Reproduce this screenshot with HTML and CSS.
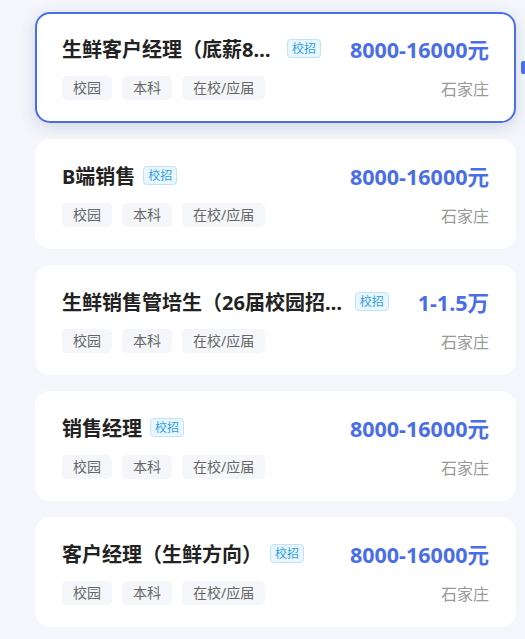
FILE: index.html
```html
<!DOCTYPE html>
<html lang="zh-CN">

<head>
    <meta charset="UTF-8">
    <meta name="viewport" content="width=device-width, initial-scale=1.0">
    <link rel="stylesheet" href="styles.css">
    <title>职位列表</title>
</head>

<body>
    <div class="job-list">
        <div class="job-card active">
            <div class="top-row">
                <div class="name-wrap">
                    <span class="job-name">生鲜客户经理（底薪8000-16000元+提成）</span>
                    <span class="badge">校招</span>
                </div>
                <span class="salary">8000-16000元</span>
            </div>
            <div class="bottom-row">
                <div class="tags">
                    <span class="tag">校园</span>
                    <span class="tag">本科</span>
                    <span class="tag">在校/应届</span>
                </div>
                <span class="city">石家庄</span>
            </div>
        </div>

        <div class="job-card">
            <div class="top-row">
                <div class="name-wrap">
                    <span class="job-name">B端销售</span>
                    <span class="badge">校招</span>
                </div>
                <span class="salary">8000-16000元</span>
            </div>
            <div class="bottom-row">
                <div class="tags">
                    <span class="tag">校园</span>
                    <span class="tag">本科</span>
                    <span class="tag">在校/应届</span>
                </div>
                <span class="city">石家庄</span>
            </div>
        </div>

        <div class="job-card">
            <div class="top-row">
                <div class="name-wrap">
                    <span class="job-name">生鲜销售管培生（26届校园招聘）</span>
                    <span class="badge">校招</span>
                </div>
                <span class="salary">1-1.5万</span>
            </div>
            <div class="bottom-row">
                <div class="tags">
                    <span class="tag">校园</span>
                    <span class="tag">本科</span>
                    <span class="tag">在校/应届</span>
                </div>
                <span class="city">石家庄</span>
            </div>
        </div>

        <div class="job-card">
            <div class="top-row">
                <div class="name-wrap">
                    <span class="job-name">销售经理</span>
                    <span class="badge">校招</span>
                </div>
                <span class="salary">8000-16000元</span>
            </div>
            <div class="bottom-row">
                <div class="tags">
                    <span class="tag">校园</span>
                    <span class="tag">本科</span>
                    <span class="tag">在校/应届</span>
                </div>
                <span class="city">石家庄</span>
            </div>
        </div>

        <div class="job-card">
            <div class="top-row">
                <div class="name-wrap">
                    <span class="job-name">客户经理（生鲜方向）</span>
                    <span class="badge">校招</span>
                </div>
                <span class="salary">8000-16000元</span>
            </div>
            <div class="bottom-row">
                <div class="tags">
                    <span class="tag">校园</span>
                    <span class="tag">本科</span>
                    <span class="tag">在校/应届</span>
                </div>
                <span class="city">石家庄</span>
            </div>
        </div>
    </div>
    <div class="scroll-mark"></div>
</body>

</html>
```

FILE: styles.css
```css
body {
    font-family: "Noto Sans", "Noto Sans CJK SC", sans-serif;
    margin: 0;
    padding: 0;
    background-color: #f4f6fc;
    overflow: hidden;
}

.job-list {
    display: flex;
    flex-direction: column;
    gap: 16px;
    padding: 12px 9px 0 35px;
}

.job-card {
    box-sizing: border-box;
    height: 110px;
    background-color: #fff;
    border: 2px solid transparent;
    border-radius: 15px;
    padding: 20px 25px 0 25px;
}

.job-card.active {
    height: 111px;
    border-color: #4a6ee6;
    box-shadow: 0 4px 16px rgba(40, 50, 80, 0.16);
}

.top-row {
    display: flex;
    align-items: center;
    height: 28px;
}

.name-wrap {
    flex: 1;
    min-width: 0;
    display: flex;
    align-items: center;
}

.job-name {
    font-size: 20px;
    font-weight: bold;
    color: #222;
    white-space: nowrap;
    overflow: hidden;
    text-overflow: ellipsis;
    min-width: 0;
}

.badge {
    flex-shrink: 0;
    margin-left: 8px;
    font-size: 12px;
    line-height: 17px;
    padding: 0 4px;
    color: #2d9fe6;
    background-color: #eaf6fe;
    border: 1px solid #bfe3f9;
    border-radius: 4px;
}

.salary {
    flex-shrink: 0;
    margin-left: 29px;
    font-size: 21.5px;
    font-weight: bold;
    color: #4a6ee6;
}

.bottom-row {
    display: flex;
    align-items: center;
    justify-content: space-between;
    margin-top: 14px;
}

.tags {
    display: flex;
    gap: 10px;
}

.tag {
    font-size: 14px;
    line-height: 24px;
    padding: 0 11px;
    color: #666;
    background-color: #f5f6fa;
    border-radius: 5px;
}

.city {
    font-size: 16px;
    color: #999;
}

.scroll-mark {
    position: absolute;
    top: 61px;
    left: 521px;
    width: 8px;
    height: 13px;
    background-color: #4a6ee6;
    border-radius: 2px;
}
```
